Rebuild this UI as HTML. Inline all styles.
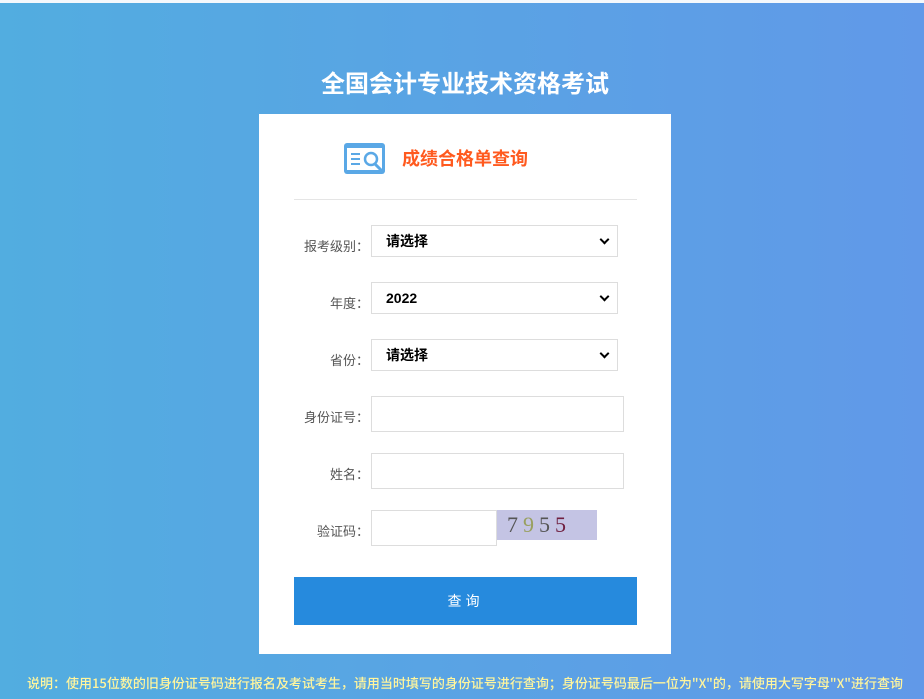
<!DOCTYPE html>
<html><head><meta charset="utf-8"><style>
*{margin:0;padding:0;box-sizing:border-box}
body{width:924px;height:699px;overflow:hidden;background:linear-gradient(90deg,#52ADE0,#6199E8);font-family:"Liberation Sans","Noto Sans CJK SC",sans-serif;position:relative}
.abs{position:absolute}
h1{position:absolute;top:64px;left:3px;width:924px;text-align:center;color:#fff;font-size:24px;font-weight:bold}
.card{left:259px;top:114px;width:412px;height:540px;background:#fff}
.lbl{position:absolute;width:110px;left:259px;text-align:right;font-size:13px;color:#555;font-family:"Noto Sans CJK SC",sans-serif;line-height:16px}
.sel{position:absolute;left:371px;width:247px;height:32px;border:1px solid #ddd;background:#fff;font-size:14px;font-weight:bold;color:#000;padding-left:14px;line-height:30px}
.sel:after{content:"";position:absolute;right:9px;top:10px;width:5px;height:5px;border-right:2px solid #000;border-bottom:2px solid #000;transform:rotate(45deg)}
.inp{position:absolute;left:371px;width:253px;height:36px;border:1px solid #ddd;background:#fff}
</style></head><body>
<div class="abs" style="left:0;top:0;width:924px;height:3px;background:#f4f8fc"></div>
<h1>全国会计专业技术资格考试</h1>
<div class="abs card"></div>
<svg class="abs" style="left:344px;top:143px" width="44" height="33" viewBox="0 0 44 33">
<rect x="0" y="0" width="41" height="31" rx="3" fill="#5AA8E6"/>
<rect x="3" y="5" width="35" height="22" fill="#fff"/>
<rect x="7" y="10" width="9" height="2" fill="#5AA8E6"/><rect x="7" y="15" width="9" height="2" fill="#5AA8E6"/><rect x="7" y="20" width="9" height="2" fill="#5AA8E6"/>
<circle cx="27" cy="16" r="6" fill="none" stroke="#5AA8E6" stroke-width="2.5"/>
<line x1="31" y1="21" x2="38" y2="28" stroke="#5AA8E6" stroke-width="3"/>
</svg>
<div class="abs" style="left:402px;top:145px;font-size:18px;font-weight:bold;color:#FF5A1F">成绩合格单查询</div>
<div class="abs" style="left:294px;top:199px;width:343px;height:1px;background:#e5e5e5"></div>
<div class="lbl" style="top:238px">报考级别：</div>
<div class="sel" style="top:225px">请选择</div>
<div class="lbl" style="top:295px">年度：</div>
<div class="sel" style="top:282px">2022</div>
<div class="lbl" style="top:352px">省份：</div>
<div class="sel" style="top:339px">请选择</div>
<div class="lbl" style="top:409px">身份证号：</div>
<div class="inp" style="top:396px"></div>
<div class="lbl" style="top:466px">姓名：</div>
<div class="inp" style="top:453px"></div>
<div class="lbl" style="top:523px">验证码：</div>
<div class="inp" style="top:510px;width:126px"></div>
<div class="abs" style="left:497px;top:510px;width:100px;height:30px;background:#c4c4e4;font-family:'Liberation Serif',serif;font-size:22px;letter-spacing:5px;padding-left:10px;line-height:30px;color:#555"><span>7</span><span style="color:#99a060">9</span><span>5</span><span style="color:#702040">5</span></div>
<div class="abs" style="left:294px;top:577px;width:343px;height:48px;background:#268ADD;color:#fff;font-size:14px;text-align:center;line-height:48px;letter-spacing:4px">查询</div>
<div class="abs" style="left:0;top:675px;width:930px;text-align:center;font-size:13px;color:#FFF59D;white-space:nowrap;font-family:'Noto Sans CJK SC',sans-serif;line-height:16px;letter-spacing:0px;font-weight:500">说明：使用15位数的旧身份证号码进行报名及考试考生，请用当时填写的身份证号进行查询；身份证号码最后一位为"X"的，请使用大写字母"X"进行查询</div>
</body></html>
